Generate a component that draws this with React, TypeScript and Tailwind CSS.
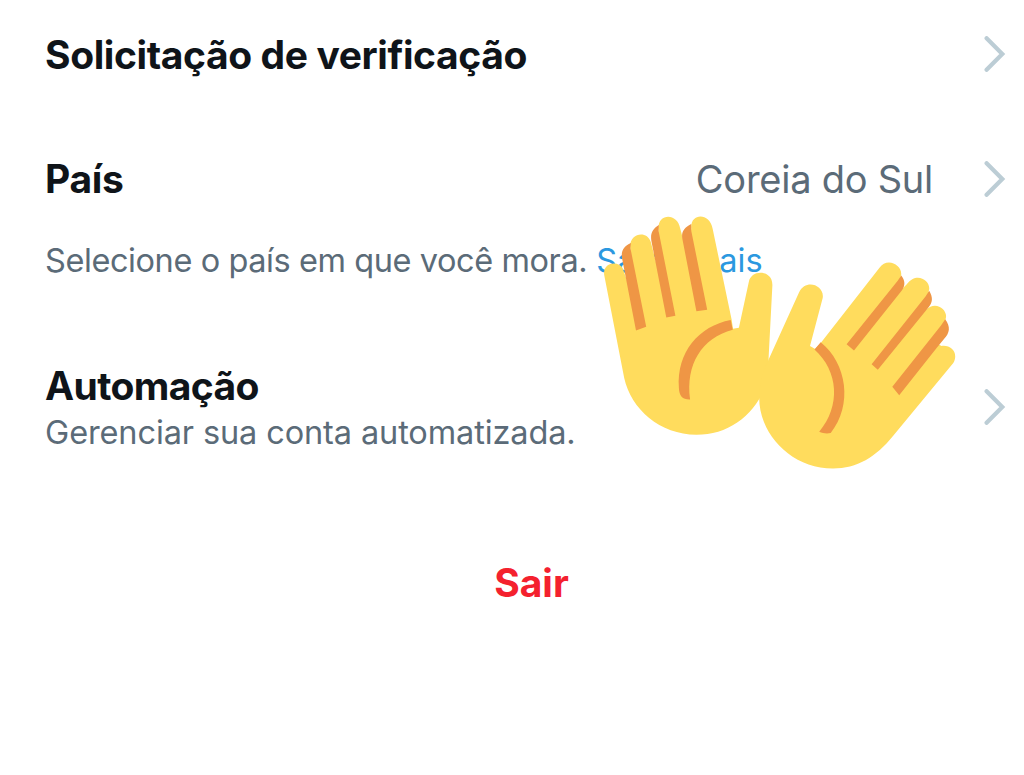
import React from 'react';

const Chevron = () => (
  <svg className="h-9 w-6 flex-shrink-0" viewBox="0 0 24 36" fill="none">
    <path
      d="M4.6 2.2 L20.3 18 L4.6 33.8"
      stroke="#bccdd5"
      strokeWidth="4.2"
      strokeLinecap="round"
      strokeLinejoin="miter"
    />
  </svg>
);

const Hands = () => (
  <svg
    className="pointer-events-none absolute left-[600px] top-[210px] h-[265px] w-[360px]"
    viewBox="600 210 360 265"
  >
    {/* Left hand */}
    <path
      fill="#ffdc5d"
      d="M604.2 275 C602.5 262 619 260.500 622.700 268.500 L634 300 L630.300 249 C628 233 647 229.500 650.800 242 L656 262 L658.500 229 C657.500 213 677.500 212.500 680.200 228.500 L686 250 L691.300 229 C689.500 213 709.800 212 712.700 229 L731.700 320 L733 328.800 L738.900 327.700 L748.800 282 C751 269 772.500 269.500 772.400 285 L768.600 358 L768 378 C759 412 731 434.700 696.500 434.700 C660 434.700 631 409 624.200 378 Z"
    />
    <g fill="#ef9645">
      <path d="M631 243 C623.500 246.500 620.700 251 622.200 259 L636 330.500 L646.200 326.700 L630.400 248 Z" />
      <path d="M658.900 225 C652.300 229 650.200 234 651.400 241 L666.300 317.500 L675.400 315.700 L658.600 231 Z" />
      <path d="M691.200 224 C684 227.500 681.200 232 682.300 238.500 L696.400 311.200 L707.200 309.700 L691.300 231 Z" />
      <path d="M730.700 320 C699 326 676.500 352 678.900 388 C679.200 396 682.500 399.700 690.100 399.500 C685.500 364.500 701.500 338 732.800 329.700 Z" />
    </g>

    {/* Right hand */}
    <path
      fill="#ffdc5d"
      d="M799 292.500 C806 278 824.800 285.500 822.700 298 L810 346 L815.200 349 L821.700 341.700 L879.300 268 C888 255.500 905.500 267 900.300 278 L896 295 L906.800 284.300 C917 270.500 932 281.500 928.800 291 L922 312 L926 309.800 C936 299.500 949.500 310.500 945.300 320 L938 344 L941.500 346 C951 344.500 959 353 953.300 363 L893 436 C876 457 857 468.500 833 468.500 C790 468.500 757 432 759.300 394 C760.500 380 764 369 769.300 358 Z"
    />
    <g fill="#ef9645">
      <path d="M901.300 275.500 C905.200 280.500 905.500 285.500 901.800 290.500 L854 350.500 L846.600 344.300 L897.500 281 Z" />
      <path d="M929.200 290.800 C933.200 297.500 932.600 302.500 928.800 307 L877.800 369.700 L871.600 364.200 L925.500 296.500 Z" />
      <path d="M945.200 319.300 C950.800 327 949.800 333 944 339 L937 347.500 L899.200 395.200 L892.300 386.700 L941 325.500 Z" />
      <path d="M820.700 342.300 C847 363.500 853 405 830.700 433 C827 433.800 823 433.400 819.200 431.800 C841 406 838.500 371 814.500 349.500 Z" />
    </g>
  </svg>
);

export default function App() {
  return (
    <div className="relative h-[775px] w-[1024px] overflow-hidden bg-white font-['Inter',sans-serif] text-[#0f1419]">
      <div className="flex h-[108px] items-center justify-between pl-[45px] pr-[18px]">
        <h2 className="mt-0.5 whitespace-nowrap text-[39px] font-bold leading-[46px] tracking-[-0.4px]">
          Solicitação de verificação
        </h2>
        <Chevron />
      </div>

      <div className="mt-[46px] flex h-[50px] items-center pl-[45px] pr-[18px]">
        <h2 className="text-[39px] font-bold leading-[46px] tracking-[-0.3px]">País</h2>
        <span className="ml-auto mr-[49px] whitespace-nowrap text-[38px] leading-[46px] tracking-[-0.25px] text-[#5b6b78]">
          Coreia do Sul
        </span>
        <Chevron />
      </div>
      <p className="mt-[34px] whitespace-nowrap pl-[45px] text-[32.5px] leading-[46px] text-[#5b6b78]">
        <span className="tracking-[-0.42px]">Selecione o país em que você mora.</span>{' '}
        <a href="#" className="text-[#2b98e0]">
          Saiba mais
        </a>
      </p>

      <div className="mt-[79px] flex items-start justify-between pl-[45px] pr-[18px]">
        <div className="whitespace-nowrap">
          <h2 className="text-[39px] font-bold leading-[46px] tracking-[-0.6px]">Automação</h2>
          <p className="pt-px text-[32.5px] leading-[46px] tracking-[-0.12px] text-[#5b6b78]">
            Gerenciar sua conta automatizada.
          </p>
        </div>
        <div className="pt-[26px]">
          <Chevron />
        </div>
      </div>

      <div className="mt-[104px] flex justify-center pl-[39px]">
        <button className="text-[39px] font-bold leading-[46px] text-[#f4212e]">Sair</button>
      </div>

      <Hands />
    </div>
  );
}
